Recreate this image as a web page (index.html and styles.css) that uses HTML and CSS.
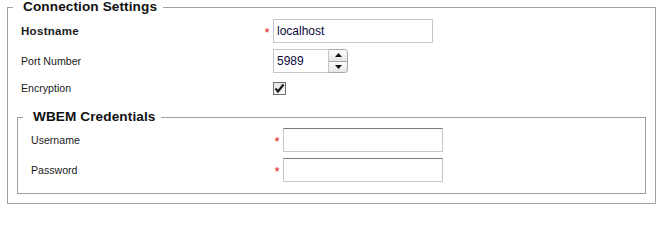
FILE: index.html
```html
<!DOCTYPE html>
<html>
<head>
<meta charset="utf-8">
<link rel="stylesheet" href="styles.css">
</head>
<body>
<fieldset class="group outer">
  <legend class="group-title">Connection Settings</legend>
  <div class="form-grid main-grid">
    <label class="field-label strong">Hostname</label>
    <span class="req">*</span>
    <input class="text-input wide" type="text" value="localhost">

    <label class="field-label">Port Number</label>
    <span class="req"></span>
    <div class="spin">
      <input class="text-input port" type="text" value="5989">
      <div class="spin-btns">
        <span class="spin-btn up"><svg width="7" height="4" viewBox="0 0 7 4"><path d="M0 4 L3.5 0 L7 4 Z" fill="#111"/></svg></span>
        <span class="spin-btn down"><svg width="7" height="4" viewBox="0 0 7 4"><path d="M0 0 L7 0 L3.5 4 Z" fill="#111"/></svg></span>
      </div>
    </div>

    <label class="field-label">Encryption</label>
    <span class="req"></span>
    <span class="check"><svg width="11" height="11" viewBox="0 0 11 11"><path d="M1.5 5.5 L4 8.5 L9.5 1.5" fill="none" stroke="#1a1a1a" stroke-width="2.2" stroke-linejoin="miter"/></svg></span>
  </div>

  <fieldset class="group inner">
    <legend class="group-title">WBEM Credentials</legend>
    <div class="form-grid cred-grid">
      <label class="field-label">Username</label>
      <span class="req">*</span>
      <input class="text-input wide empty" type="text">

      <label class="field-label">Password</label>
      <span class="req">*</span>
      <input class="text-input wide empty" type="password">
    </div>
  </fieldset>
</fieldset>
</body>
</html>
```

FILE: styles.css
```css
html, body {
  margin: 0;
  padding: 0;
  background: #ffffff;
}

body {
  font-family: "Liberation Sans", Arial, sans-serif;
  font-size: 11px;
  color: #1a1a1a;
}

.group {
  border: 1px solid #a0a0a0;
  margin: 0;
  padding: 0;
  min-width: 0;
}

.outer {
  margin: 0 5px 0 7px;
}

.inner {
  margin: 13px 9px 9px 9px;
  padding-bottom: 11px;
}

.group-title {
  font-weight: bold;
  font-size: 13.6px;
  letter-spacing: 0.1px;
  line-height: 14px;
  height: 14px;
  color: #111;
  margin-left: 5px;
  padding: 0 6px 0 10px;
}

.form-grid {
  display: grid;
  grid-template-columns: 240px 12px auto;
  column-gap: 0;
  row-gap: 6px;
  align-items: center;
  padding-left: 13px;
}

.main-grid {
  padding-top: 5px;
  grid-template-rows: 24px 24px 18px;
}

.cred-grid {
  padding-top: 4px;
  grid-template-rows: 24px 24px;
}

.field-label {
  font-size: 10.6px;
  line-height: 13px;
  color: #1a1a1a;
}

.field-label.strong {
  font-weight: bold;
  font-size: 11.5px;
  letter-spacing: 0.3px;
}

.req {
  color: #e0141e;
  font-size: 13px;
  text-align: center;
  line-height: 13px;
  padding-top: 3px;
}

.text-input {
  box-sizing: border-box;
  height: 24px;
  margin: 0;
  border: 1px solid #c6c6c6;
  padding: 0 3px;
  font-family: "Liberation Sans", Arial, sans-serif;
  font-size: 12px;
  color: #0a0a3c;
  background: #fff;
  outline: none;
}

.text-input.wide {
  width: 160px;
}

.text-input.empty {
  border-top-color: #7a7a7a;
}

.spin {
  display: flex;
  height: 24px;
}

.text-input.port {
  width: 56px;
}

.spin-btns {
  box-sizing: border-box;
  width: 19px;
  height: 24px;
  display: flex;
  flex-direction: column;
  border: 1px solid #a8a8a8;
  border-left: none;
  border-radius: 0 4px 4px 0;
  overflow: hidden;
}

.spin-btn {
  flex: 1;
  display: flex;
  align-items: center;
  justify-content: center;
  background: linear-gradient(#fdfdfd, #e6e6e6);
}

.spin-btn.up {
  border-bottom: 1px solid #a8a8a8;
}

.check {
  box-sizing: border-box;
  width: 13px;
  height: 13px;
  border: 1px solid #6f6f6f;
  background: linear-gradient(#e4e4e4, #fbfbfb);
  display: flex;
  align-items: center;
  justify-content: center;
}
```
